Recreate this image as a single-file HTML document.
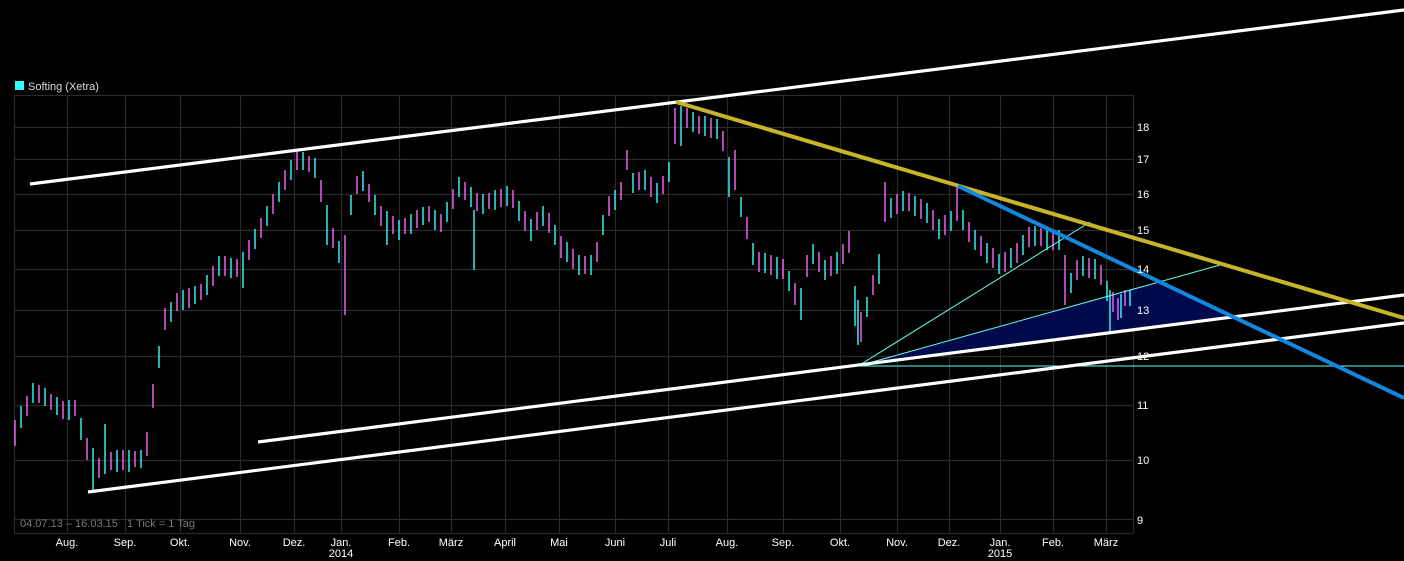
<!DOCTYPE html>
<html><head><meta charset="utf-8"><style>
html,body{margin:0;padding:0;background:#000;width:1404px;height:561px;overflow:hidden}
svg{display:block}
text{font-family:"Liberation Sans",sans-serif;font-size:11px}
</style></head><body>
<svg width="1404" height="561" viewBox="0 0 1404 561">
<rect width="1404" height="561" fill="#000"/>
<g stroke="#2a2a2a" stroke-width="1.2" fill="none">
<path d="M14.5,95V533M67.5,95V533M125.5,95V533M180.5,95V533M240.5,95V533M294.5,95V533M341.5,95V533M399.5,95V533M451.5,95V533M505.5,95V533M559.5,95V533M615.5,95V533M668.5,95V533M727.5,95V533M783.5,95V533M840.5,95V533M897.5,95V533M949.5,95V533M1000.5,95V533M1053.5,95V533M1106.5,95V533M1133.5,95V533"/>
<path d="M14,95.5H1133M14,127.5H1133M14,159.5H1133M14,194.5H1133M14,230.5H1133M14,269.5H1133M14,310.5H1133M14,356.5H1133M14,405.5H1133M14,460.5H1133M14,519.5H1133M14,533.5H1133"/>
</g>
<polygon points="858,366 1157,283 1233,318 858,365" fill="#000a4a"/>
<path stroke="#ff66ff" stroke-width="1.4" fill="none" d="M15,420v26M27,396v20M39,385v18M51,394v16M63,401v18M75,400v16M87,438v22M99,458v20M111,452v18M123,450v20M135,451v16M147,432v24M153,384v24M165,308v22M177,293v18M189,288v20M201,284v16M213,266v20M225,256v20M237,259v18M249,240v20M261,218v20M273,194v20M285,170v20M297,152v18M309,156v16M321,180v22M333,228v20M345,235v80M357,176v18M369,184v18M381,206v20M393,216v18M405,218v16M417,210v18M429,206v16M441,214v18M453,189v20M465,182v18M477,193v18M489,193v16M501,189v18M513,190v18M525,211v20M537,212v18M549,213v20M561,236v22M573,249v20M585,256v18M597,242v20M609,196v20M621,182v18M627,150v20M639,172v18M651,177v20M663,176v18M675,108v36M687,108v20M699,116v18M711,118v20M723,131v20M735,150v40M747,217v22M759,252v20M771,255v20M783,259v20M795,283v22M807,255v22M819,252v20M831,256v20M843,244v20M849,231v22M861,312v30M873,275v20M885,182v40M897,194v20M909,193v18M921,199v20M933,210v20M945,215v20M957,186v35M969,222v20M981,236v20M993,248v20M1005,252v20M1017,243v20M1029,227v20M1041,228v18M1053,230v20M1065,255v50M1077,260v20M1089,258v20M1101,265v20M1113,292v20M1118,298v22M1125,290v16"/>
<path stroke="#33ffff" stroke-width="1.4" fill="none" d="M21,406v22M33,383v20M45,388v18M57,397v18M69,400v20M81,418v22M93,448v44M105,424v50M117,450v22M129,450v22M141,450v18M159,346v22M171,302v20M183,290v20M195,286v18M207,275v20M219,256v20M231,258v20M243,252v36M255,229v20M267,206v20M279,182v20M291,160v20M303,152v18M315,158v20M327,205v40M339,241v22M351,195v20M363,171v20M375,195v20M387,211v34M399,220v20M411,214v20M423,207v18M435,210v20M447,202v20M459,177v20M471,187v20M474,210v60M483,194v20M495,190v20M507,186v20M519,201v20M531,219v22M543,206v20M555,225v20M567,242v20M579,255v20M591,255v20M603,215v20M615,190v20M633,173v20M645,170v20M657,183v20M669,162v20M681,106v40M693,112v20M705,116v20M717,119v20M729,157v40M741,197v20M753,243v22M765,253v20M777,257v22M789,271v20M801,288v32M813,244v20M825,260v20M837,252v22M855,286v40M858,300v45M867,297v20M879,254v30M891,198v20M903,191v20M915,196v20M927,203v20M939,219v20M951,211v20M963,210v20M975,230v20M987,243v20M999,254v20M1011,248v20M1023,235v20M1035,226v20M1047,230v20M1059,230v20M1071,273v20M1083,256v20M1095,259v20M1107,281v20M1110,290v43M1121,294v24M1130,290v16"/>
<g stroke="#66ffee" stroke-width="1" fill="none">
<line x1="858" y1="366" x2="1220" y2="265"/>
<line x1="858" y1="366" x2="1090" y2="222"/>
<line x1="858" y1="366" x2="1404" y2="366"/>
</g>
<g stroke="#fff" stroke-width="3.2">
<line x1="30" y1="184" x2="1404" y2="10"/>
<line x1="88" y1="492" x2="1404" y2="323"/>
<line x1="258" y1="442" x2="1404" y2="295"/>
</g>
<line x1="676" y1="102" x2="1404" y2="318" stroke="#c8b428" stroke-width="4"/>
<line x1="958" y1="186" x2="1404" y2="398" stroke="#1188e0" stroke-width="4"/>
<rect x="15" y="81" width="9" height="9" fill="#33ffff"/>
<text x="28" y="90" fill="#ddd">Softing (Xetra)</text>
<text x="20" y="527" fill="#777" font-size="10.5">04.07.13 – 16.03.15 &#160; 1 Tick = 1 Tag</text>
<g fill="#fff">
<text x="1137" y="131">18</text><text x="1137" y="163">17</text><text x="1137" y="198">16</text>
<text x="1137" y="234">15</text><text x="1137" y="273">14</text><text x="1137" y="314">13</text>
<text x="1137" y="360">12</text><text x="1137" y="409">11</text><text x="1137" y="464">10</text>
<text x="1137" y="524">9</text>
</g>
<g fill="#fff" text-anchor="middle" font-size="10.5">
<text x="67" y="546">Aug.</text><text x="125" y="546">Sep.</text><text x="180" y="546">Okt.</text>
<text x="240" y="546">Nov.</text><text x="294" y="546">Dez.</text><text x="341" y="546">Jan.</text>
<text x="341" y="557">2014</text>
<text x="399" y="546">Feb.</text><text x="451" y="546">März</text><text x="505" y="546">April</text>
<text x="559" y="546">Mai</text><text x="615" y="546">Juni</text><text x="668" y="546">Juli</text>
<text x="727" y="546">Aug.</text><text x="783" y="546">Sep.</text><text x="840" y="546">Okt.</text>
<text x="897" y="546">Nov.</text><text x="949" y="546">Dez.</text><text x="1000" y="546">Jan.</text>
<text x="1000" y="557">2015</text>
<text x="1053" y="546">Feb.</text><text x="1106" y="546">März</text>
</g>
</svg>
</body></html>
